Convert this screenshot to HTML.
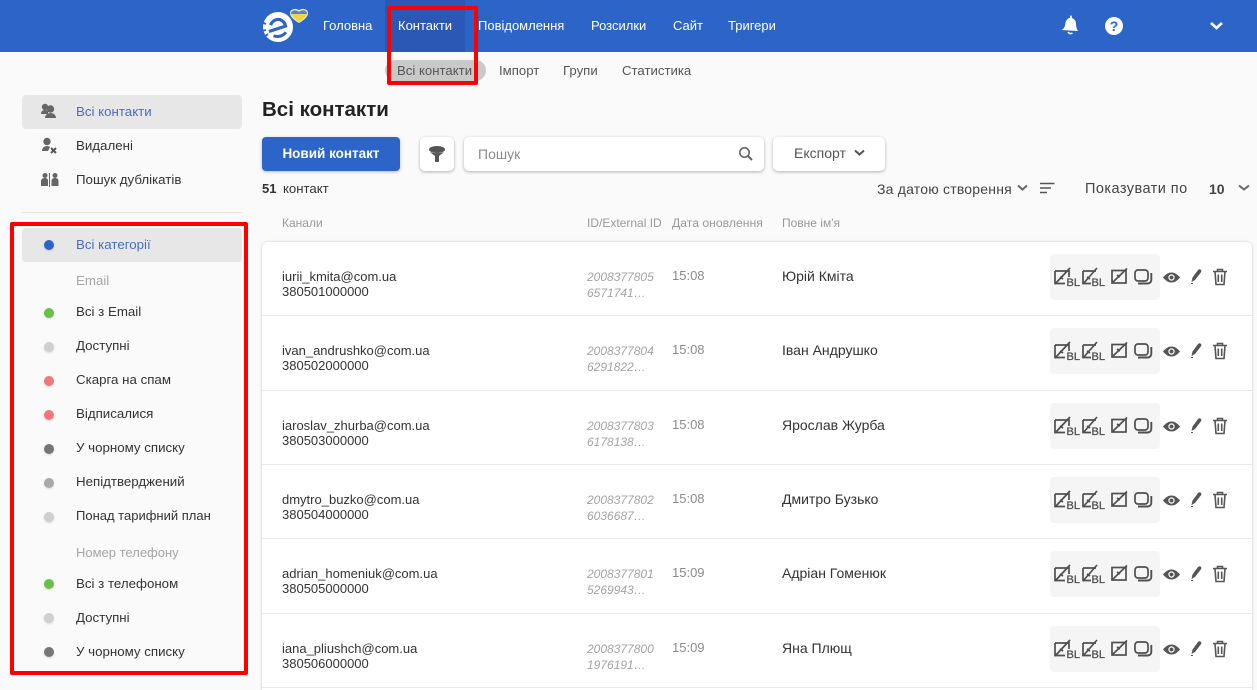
<!DOCTYPE html>
<html lang="uk"><head><meta charset="utf-8"><title>Контакти</title>
<style>
html,body{margin:0;padding:0;width:1257px;height:690px;overflow:hidden}
#w{position:relative;width:1257px;height:690px;overflow:hidden;background:#fafafa;font-family:"Liberation Sans",sans-serif;color:#333;font-size:13px}
.t{position:absolute;white-space:nowrap;line-height:20px;height:20px}
.a{position:absolute}
.nav{color:#fff;font-size:13px}
.side{font-size:13.3px;left:76px;color:#333}
.blue{color:#4a6cc0}
.grey{color:#a6a6a6}
.dot{position:absolute;left:44px;width:10px;height:10px;border-radius:50%;box-shadow:0 1px 2px rgba(0,0,0,.15)}
.btn{position:absolute;background:#fff;border-radius:5px;box-shadow:0 1px 3px rgba(0,0,0,.3);box-sizing:border-box}
.row{position:absolute;left:262px;width:990px;background:#fff;border-bottom:1px solid #e8e8e8;box-sizing:border-box}
.row .t{font-size:13px}
.row .id{left:325px;font-style:italic;font-size:12px;color:#a3a3a3}
.row .tm{left:410px;top:24px;color:#8a8a8a}
.row .nm{left:520px;top:24px;color:#333;font-size:14px}
.row .acts{position:absolute;left:788px;top:12px;width:110px;height:46px;background:#f5f5f5;border-radius:4px}
.row svg{position:absolute;left:788px;top:12px}
</style></head><body><div id="w">
<svg width="0" height="0" style="position:absolute"><defs>
<g id="ic">
<g fill="none" stroke="#4f4f4f" stroke-width="1.700">
<path d="M5 17H19V23M5 17V29.500H15"/><path d="M5 30 20 14"/><path d="M10 23l3 2"/>
<path d="M33 17H46M33 17V29.500H41M33 30 47 14M37 23l3 2"/>
<rect x="62" y="16.500" width="14" height="12.500"/><path d="M62 29 77 14.500M67 21l3 2"/>
<rect x="85" y="16" width="13" height="11" rx="3"/><path d="M101.300 19v7a3.500 3.500 0 0 1-3.500 3.500H88" stroke-width="1.900"/>
</g>
<text x="16.500" y="32" font-family="Liberation Sans,sans-serif" font-size="11" fill="#4f4f4f" stroke="#4f4f4f" stroke-width=".3">BL</text>
<text x="41.500" y="32" font-family="Liberation Sans,sans-serif" font-size="11" fill="#4f4f4f" stroke="#4f4f4f" stroke-width=".3">BL</text>
<path d="M113 23.500c3-3.500 5.500-5 8.500-5s5.500 1.500 8.500 5c-3 3.500-5.500 5-8.500 5s-5.500-1.500-8.500-5z" fill="#555"/><circle cx="121.500" cy="23.500" r="3.200" fill="#f5f5f5"/><circle cx="121.500" cy="23.500" r="1.900" fill="#555"/>
<path d="M141.500 28l1-4.500 5.500-7.500c1-1 2-1 2.800-.3s.8 1.800 0 2.800l-5.800 7.500z" fill="#555"/><path d="M141 29.500h2" stroke="#555" stroke-width="1"/>
<g fill="none" stroke="#555" stroke-width="1.600"><path d="M163 17.500h14M167.500 17.500v-2h5v2M165 17.500l1 13h8l1-13M168.300 20.500v7.500M171.700 20.500v7.500"/></g>
</g>
</defs></svg>

<div class="a" style="left:0;top:0;width:1257px;height:52px;background:#2c64c8"></div>
<div class="a" style="left:385px;top:0;width:80px;height:52px;background:#2a58b4"></div>

<svg class="a" style="left:258px;top:6px" width="54" height="40" viewBox="0 0 54 40">
<circle cx="20" cy="21" r="15" fill="#fff"/>
<g transform="rotate(-18 20 21)">
<path d="M10 22.500h17.500c.5-5.500-3-9-7.500-9-3 0-5 1.500-6.500 3.500" fill="none" stroke="#2c64c8" stroke-width="3.200"/>
<path d="M13 28c4 3 9 3 13 .5" fill="none" stroke="#2c64c8" stroke-width="3"/>
</g>
<path d="M3 16l5 2M3 25l5-1M6 31l4-3" stroke="#2c64c8" stroke-width="1.800"/>
<path d="M41 16.500c-5-3-8.500-6-8.500-9.500 0-3.500 5.500-5 8.500-2 3-3 8.500-1.500 8.500 2 0 3.500-3.500 6.500-8.500 9.500z" fill="#f5d33c" stroke="#e8eef8" stroke-width="1"/>
<path d="M33 8c-.5-3.500 5-5 8-2 3-3 8.500-1.500 8 2z" fill="#4d87d8"/>
</svg>

<div class="t nav" style="left:323px;top:16px">Головна</div>
<div class="t nav" style="left:398px;top:16px">Контакти</div>
<div class="t nav" style="left:478px;top:16px">Повідомлення</div>
<div class="t nav" style="left:591px;top:16px">Розсилки</div>
<div class="t nav" style="left:673px;top:16px">Сайт</div>
<div class="t nav" style="left:728px;top:16px">Тригери</div>

<svg class="a" style="left:1060px;top:14px" width="22" height="22" viewBox="0 0 22 22"><path d="M1.500 16c3-1.500 3.500-4 4-7 .5-3 2.500-4.800 4.500-5.200l.2-2.300 1.600.2v2.300c2.800 1 4 3 4.200 5.500.2 3 .4 5 2 7.500z" fill="#fff"/><path d="M8 18c1 1.800 3 2 4.500 1" stroke="#fff" stroke-width="1.500" fill="none"/></svg>
<svg class="a" style="left:1104px;top:16px" width="20" height="20" viewBox="0 0 20 20"><circle cx="10" cy="10" r="9" fill="#fff"/><text x="10" y="15" text-anchor="middle" font-family="Liberation Sans,sans-serif" font-weight="700" font-size="14" fill="#2c64c8">?</text></svg>
<svg class="a" style="left:1209px;top:21px" width="15" height="10" viewBox="0 0 15 10"><path d="M2 2l5.500 5L13 2" fill="none" stroke="#fff" stroke-width="2.600"/></svg>

<div class="a" style="left:385px;top:60px;width:101px;height:21px;background:#c9c9c9;border-radius:11px"></div>
<div class="t" style="left:397px;top:61px;font-size:13.200px;color:#555">Всі контакти</div>
<div class="t" style="left:499px;top:61px;font-size:13.200px;color:#555">Імпорт</div>
<div class="t" style="left:563px;top:61px;font-size:13.200px;color:#555">Групи</div>
<div class="t" style="left:622px;top:61px;font-size:13.200px;color:#555">Статистика</div>
<div class="a" style="left:387px;top:6px;width:91px;height:79px;box-sizing:border-box;border:4px solid #f00;border-radius:2px"></div>

<div class="a" style="left:22px;top:95px;width:220px;height:34px;background:#e7e7e7;border-radius:4px"></div>
<svg class="a" style="left:40px;top:103px" width="17" height="17" viewBox="0 0 17 17"><circle cx="5" cy="4" r="3.200" fill="#666"/><path d="M1 11c0-3 2-4 4-4s3 1 3 2v2z" fill="#666"/><circle cx="10.500" cy="6" r="3.700" fill="#666"/><path d="M5 15c0-3 2.500-5 5.500-5s5.500 2 5.500 5z" fill="#666"/></svg>
<div class="t side blue" style="top:102px">Всі контакти</div>
<svg class="a" style="left:41px;top:137px" width="17" height="18" viewBox="0 0 17 18"><circle cx="6" cy="4.500" r="3.700" fill="#666"/><path d="M1 14c0-3 2-5 5-5 1.500 0 2.500.500 3 1l-2 4z" fill="#666"/><path d="M10 11l5 5M15 11l-5 5" stroke="#555" stroke-width="2"/></svg>
<div class="t side" style="top:136px">Видалені</div>
<svg class="a" style="left:41px;top:172px" width="18" height="16" viewBox="0 0 18 16"><circle cx="4" cy="3.500" r="2.500" fill="#666"/><path d="M0 14V9c0-2 2-3 4-3s3 1 3 3v5z" fill="#666"/><path d="M8.500 1v14" stroke="#666"/><circle cx="14" cy="3.500" r="2.500" fill="#666"/><path d="M10.500 14V9c0-2 1.500-3 3.500-3s3.500 1 3.500 3v5z" fill="#666"/></svg>
<div class="t side" style="top:170px">Пошук дублікатів</div>
<div class="a" style="left:22px;top:212px;width:220px;height:1px;background:#e6e6e6"></div>

<div class="a" style="left:22px;top:228px;width:220px;height:34px;background:#e7e7e7;border-radius:4px"></div>
<div class="dot" style="top:240px;background:#2c64c8"></div>
<div class="t side blue" style="top:235px">Всі категорії</div>
<div class="t side grey" style="top:271px">Email</div>
<div class="dot" style="top:308px;background:#6abf4b"></div><div class="t side" style="top:302px">Всі з Email</div>
<div class="dot" style="top:342px;background:#cfcfcf"></div><div class="t side" style="top:336px">Доступні</div>
<div class="dot" style="top:376px;background:#f07878"></div><div class="t side" style="top:370px">Скарга на спам</div>
<div class="dot" style="top:410px;background:#f07878"></div><div class="t side" style="top:404px">Відписалися</div>
<div class="dot" style="top:444px;background:#757575"></div><div class="t side" style="top:438px">У чорному списку</div>
<div class="dot" style="top:478px;background:#a8a8a8"></div><div class="t side" style="top:472px">Непідтверджений</div>
<div class="dot" style="top:512px;background:#cfcfcf"></div><div class="t side" style="top:506px;font-size:13px">Понад тарифний план</div>
<div class="t side grey" style="top:543px;font-size:13px">Номер телефону</div>
<div class="dot" style="top:579px;background:#6abf4b"></div><div class="t side" style="top:574px">Всі з телефоном</div>
<div class="dot" style="top:613px;background:#cfcfcf"></div><div class="t side" style="top:608px">Доступні</div>
<div class="dot" style="top:647px;background:#757575"></div><div class="t side" style="top:642px">У чорному списку</div>
<div class="a" style="left:10px;top:222px;width:238px;height:453px;box-sizing:border-box;border:4px solid #f00;border-radius:2px"></div>

<div class="t" style="left:262px;top:99px;font-size:20.500px;font-weight:700;color:#222;line-height:22px;height:22px">Всі контакти</div>
<div class="a" style="left:262px;top:137px;width:138px;height:34px;background:#2c64c8;border-radius:4px;box-shadow:0 1px 3px rgba(0,0,0,.25)"></div>
<div class="t" style="left:262px;width:138px;text-align:center;top:144px;color:#fff;font-weight:700;font-size:13.500px">Новий контакт</div>
<div class="btn" style="left:420px;top:137px;width:34px;height:34px"></div>
<svg class="a" style="left:428px;top:146px" width="18" height="17" viewBox="0 0 18 17"><ellipse cx="9" cy="3.500" rx="8" ry="3.500" fill="#555"/><path d="M2 6c2 2 4 3 5 4v6h4v-6c1-1 3-2 5-4-4 1.500-10 1.500-14 0z" fill="#555"/></svg>
<div class="btn" style="left:464px;top:137px;width:300px;height:34px"></div>
<div class="t" style="left:478px;top:144px;font-size:14px;color:#8a8a8a">Пошук</div>
<svg class="a" style="left:738px;top:146px" width="15" height="15" viewBox="0 0 15 15"><circle cx="6.500" cy="6.500" r="4.700" fill="none" stroke="#666" stroke-width="1.600"/><path d="M10 10l4 4" stroke="#666" stroke-width="2"/></svg>
<div class="btn" style="left:773px;top:137px;width:112px;height:34px"></div>
<div class="t" style="left:794px;top:143px;color:#555;font-size:14px">Експорт</div>
<svg class="a" style="left:854px;top:149px" width="11" height="8" viewBox="0 0 11 8"><path d="M1 1.500l4.500 4 4.500-4" fill="none" stroke="#555" stroke-width="2"/></svg>

<div class="t" style="left:262px;top:179px;font-weight:700;color:#333;font-size:13px">51</div>
<div class="t" style="left:283px;top:179px;color:#333;font-size:13.200px">контакт</div>
<div class="t" style="left:877px;top:179px;color:#444;font-size:14px;letter-spacing:.2px">За датою створення</div>
<svg class="a" style="left:1017px;top:184px" width="11" height="8" viewBox="0 0 11 8"><path d="M1 1.500l4.500 4 4.500-4" fill="none" stroke="#666" stroke-width="2"/></svg>
<svg class="a" style="left:1040px;top:182px" width="15" height="12" viewBox="0 0 15 12"><path d="M0 1.500h14.500M0 6h11M0 10.500h7" stroke="#555" stroke-width="1.600"/></svg>
<div class="t" style="left:1085px;top:179px;color:#444;font-size:14.500px;letter-spacing:.45px">Показувати по</div>
<div class="t" style="left:1209px;top:179px;font-weight:700;color:#444;font-size:14px">10</div>
<svg class="a" style="left:1238px;top:184px" width="12" height="8" viewBox="0 0 12 8"><path d="M1 1.500l5 4 5-4" fill="none" stroke="#666" stroke-width="2"/></svg>

<div class="t" style="left:282px;top:213px;font-size:12px;color:#999">Канали</div>
<div class="t" style="left:587px;top:213px;font-size:12px;color:#999">ID/External ID</div>
<div class="t" style="left:672px;top:213px;font-size:12.200px;color:#999">Дата оновлення</div>
<div class="t" style="left:782px;top:213px;font-size:12px;color:#999">Повне ім'я</div>

<div class="a" style="left:262px;top:242px;width:990px;height:460px;background:#fff;border-radius:6px 6px 0 0;box-shadow:0 0 3px rgba(0,0,0,.18)"></div>

<div class="row" style="top:242px;height:74px;border-radius:6px 6px 0 0"><div class="acts"></div><svg width="190" height="46" viewBox="0 0 190 46"><use href="#ic"/></svg>
<div class="t" style="left:20px;top:25px">iurii_kmita@com.ua</div><div class="t" style="left:20px;top:40px">380501000000</div><div class="t id" style="top:25px">2008377805</div><div class="t id" style="top:41px">6571741…</div><div class="t tm">15:08</div><div class="t nm">Юрій Кміта</div></div>
<div class="row" style="top:316px;height:75px"><div class="acts"></div><svg width="190" height="46" viewBox="0 0 190 46"><use href="#ic"/></svg>
<div class="t" style="left:20px;top:25px">ivan_andrushko@com.ua</div><div class="t" style="left:20px;top:40px">380502000000</div><div class="t id" style="top:25px">2008377804</div><div class="t id" style="top:41px">6291822…</div><div class="t tm">15:08</div><div class="t nm">Іван Андрушко</div></div>
<div class="row" style="top:391px;height:74px"><div class="acts"></div><svg width="190" height="46" viewBox="0 0 190 46"><use href="#ic"/></svg>
<div class="t" style="left:20px;top:25px">iaroslav_zhurba@com.ua</div><div class="t" style="left:20px;top:40px">380503000000</div><div class="t id" style="top:25px">2008377803</div><div class="t id" style="top:41px">6178138…</div><div class="t tm">15:08</div><div class="t nm">Ярослав Журба</div></div>
<div class="row" style="top:465px;height:74px"><div class="acts"></div><svg width="190" height="46" viewBox="0 0 190 46"><use href="#ic"/></svg>
<div class="t" style="left:20px;top:25px">dmytro_buzko@com.ua</div><div class="t" style="left:20px;top:40px">380504000000</div><div class="t id" style="top:25px">2008377802</div><div class="t id" style="top:41px">6036687…</div><div class="t tm">15:08</div><div class="t nm">Дмитро Бузько</div></div>
<div class="row" style="top:539px;height:75px"><div class="acts"></div><svg width="190" height="46" viewBox="0 0 190 46"><use href="#ic"/></svg>
<div class="t" style="left:20px;top:25px">adrian_homeniuk@com.ua</div><div class="t" style="left:20px;top:40px">380505000000</div><div class="t id" style="top:25px">2008377801</div><div class="t id" style="top:41px">5269943…</div><div class="t tm">15:09</div><div class="t nm">Адріан Гоменюк</div></div>
<div class="row" style="top:614px;height:74px"><div class="acts"></div><svg width="190" height="46" viewBox="0 0 190 46"><use href="#ic"/></svg>
<div class="t" style="left:20px;top:25px">iana_pliushch@com.ua</div><div class="t" style="left:20px;top:40px">380506000000</div><div class="t id" style="top:25px">2008377800</div><div class="t id" style="top:41px">1976191…</div><div class="t tm">15:09</div><div class="t nm">Яна Плющ</div></div>
</div></body></html>
